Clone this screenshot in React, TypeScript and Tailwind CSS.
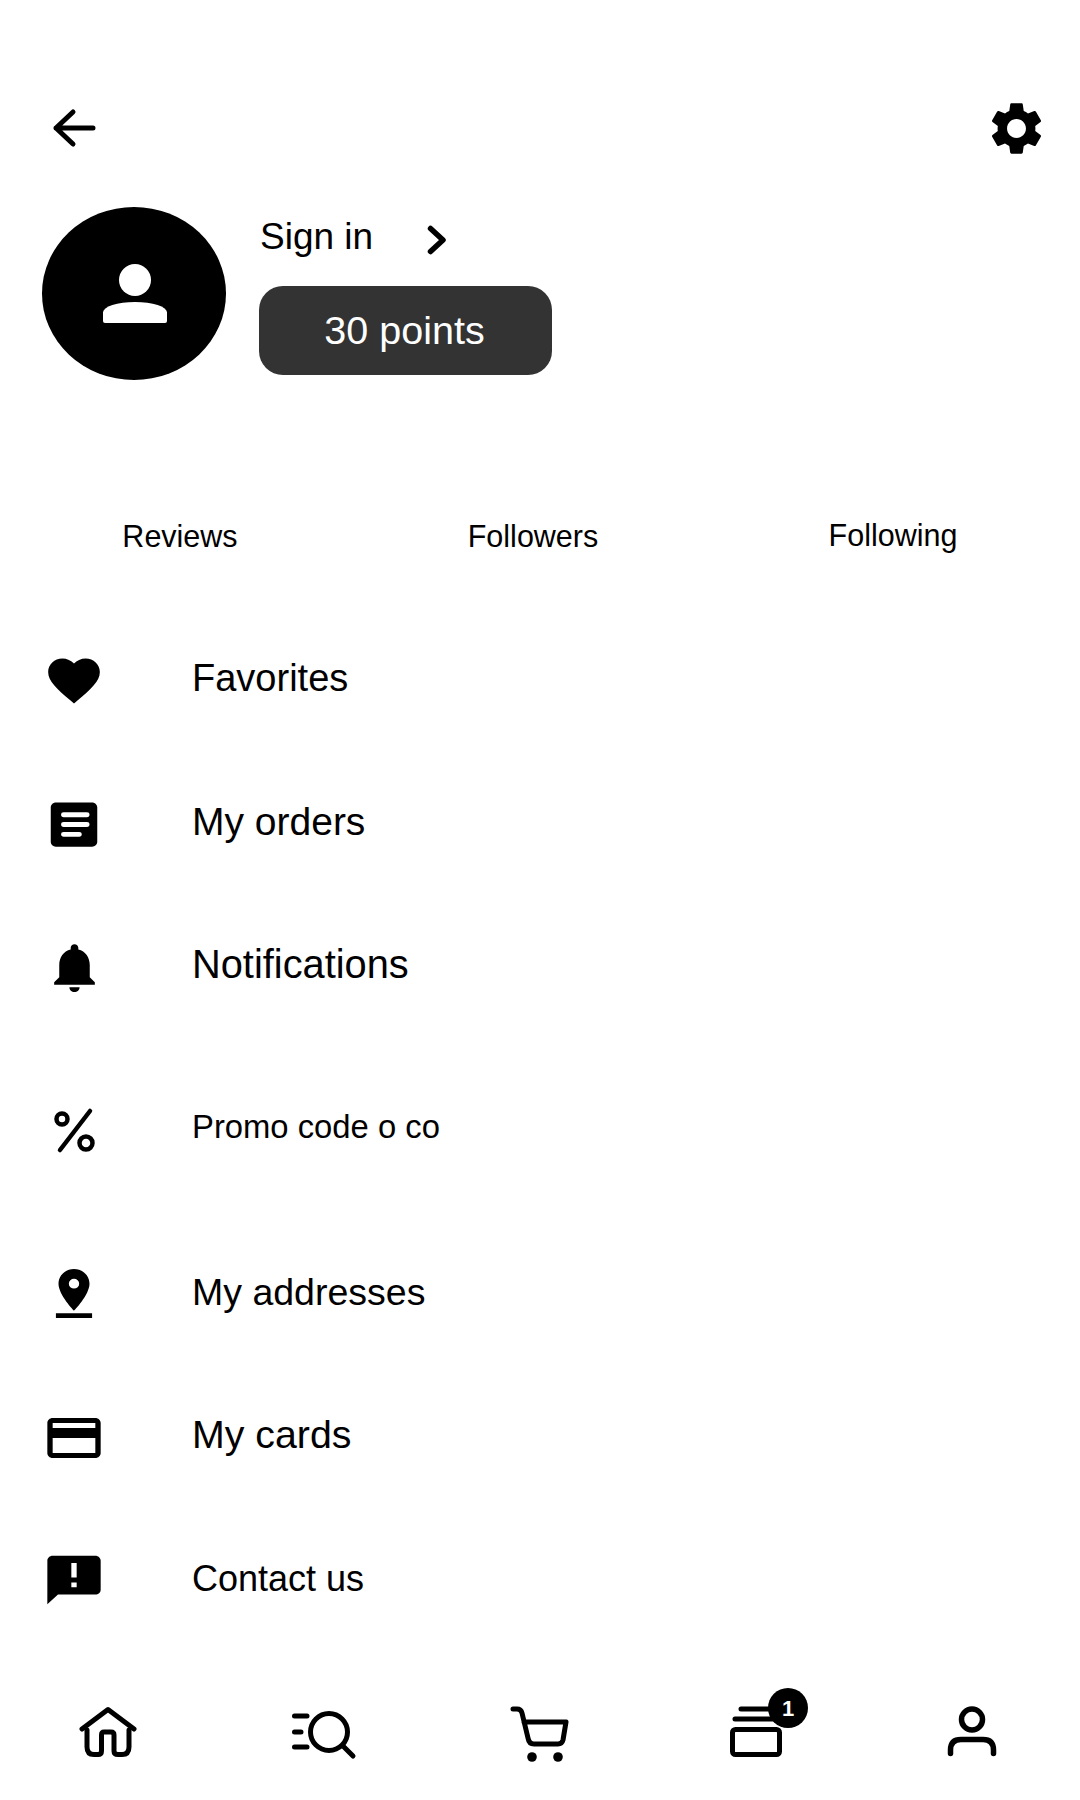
import React from "react";

const font = { fontFamily: '"Liberation Sans", Arial, sans-serif' };

function Mi({ d, cls }: { d: string; cls: string }) {
  return (
    <svg viewBox="0 0 24 24" className={cls} fill="#000" fillRule="evenodd" preserveAspectRatio="none">
      <path d={d} />
    </svg>
  );
}

const P = {
  heart: "M12 21.35l-1.45-1.32C5.4 15.36 2 12.28 2 8.5 2 5.42 4.42 3 7.5 3c1.74 0 3.41.81 4.5 2.09C13.09 3.81 14.76 3 16.5 3 19.58 3 22 5.42 22 8.5c0 3.78-3.4 6.86-8.55 11.54L12 21.35z",
  article: "M19 3H5c-1.1 0-2 .9-2 2v14c0 1.1.9 2 2 2h14c1.1 0 2-.9 2-2V5c0-1.1-.9-2-2-2zm-5 14H8a1 1 0 0 1 0-2h6a1 1 0 0 1 0 2zm3-4H8a1 1 0 0 1 0-2h9a1 1 0 0 1 0 2zm0-4H8a1 1 0 0 1 0-2h9a1 1 0 0 1 0 2z",
  bell: "M12 22c1.1 0 2-.9 2-2h-4c0 1.1.89 2 2 2zm6-6v-5c0-3.07-1.64-5.64-4.5-6.32V4c0-.83-.67-1.5-1.5-1.5s-1.5.67-1.5 1.5v.68C7.63 5.36 6 7.92 6 11v5l-2 2v1h16v-1l-2-2z",
  pin: "M12 2C8.69 2 6 4.69 6 8c0 4.5 6 11 6 11s6-6.5 6-11c0-3.31-2.69-6-6-6zm0 8a2 2 0 1 1 0-4 2 2 0 0 1 0 4zM5 20h14v2H5z",
  card: "M20 4H4c-1.11 0-1.99.89-1.99 2L2 18c0 1.11.89 2 2 2h16c1.11 0 2-.89 2-2V6c0-1.11-.89-2-2-2zm0 14H4v-6h16v6zm0-10H4V6h16v2z",
  alert: "M20 2H4c-1.1 0-1.99.9-1.99 2L2 22l4-4h14c1.1 0 2-.9 2-2V4c0-1.1-.9-2-2-2zm-7 9h-2V5h2v6zm0 4h-2v-2h2v2z",
  gear: "M19.14 12.94c.04-.3.06-.61.06-.94 0-.32-.02-.64-.07-.94l2.03-1.58c.18-.14.23-.41.12-.61l-1.92-3.32c-.12-.22-.37-.29-.59-.22l-2.39.96c-.5-.38-1.03-.7-1.62-.94l-.36-2.54c-.04-.24-.24-.41-.48-.41h-3.84c-.24 0-.43.17-.47.41l-.36 2.54c-.59.24-1.13.57-1.62.94l-2.39-.96c-.22-.08-.47 0-.59.22L2.74 8.87c-.12.21-.08.47.12.61l2.03 1.58c-.05.3-.09.63-.09.94s.02.64.07.94l-2.03 1.58c-.18.14-.23.41-.12.61l1.92 3.32c.12.22.37.29.59.22l2.39-.96c.5.38 1.03.7 1.62.94l.36 2.54c.05.24.24.41.48.41h3.84c.24 0 .44-.17.47-.41l.36-2.54c.59-.24 1.13-.56 1.62-.94l2.39.96c.22.08.47 0 .59-.22l1.92-3.32c.12-.22.07-.47-.12-.61l-2.01-1.58zM12 15.6c-1.98 0-3.6-1.62-3.6-3.6s1.62-3.6 3.6-3.6 3.6 1.62 3.6 3.6-1.62 3.6-3.6 3.6z",
};

function Percent() {
  return (
    <svg viewBox="0 0 56 56" className="w-[56px] h-[56px] shrink-0 -ml-[2px] -mt-[2px]" fill="none" stroke="#000" strokeWidth="4.5" strokeLinecap="round">
      <path d="M45 13 L15 52" />
      <circle cx="17" cy="21" r="5.5" />
      <circle cx="41" cy="45" r="6.5" />
    </svg>
  );
}

function Row({ icon, label, cls, textCls }: { icon: React.ReactNode; label: string; cls: string; textCls: string }) {
  return (
    <div className={"flex items-center h-[60px] " + cls}>
      <div className="w-[60px] h-[60px] ml-[44px] flex items-center justify-center shrink-0">{icon}</div>
      <span className={"ml-[88px] text-black leading-none " + textCls}>{label}</span>
    </div>
  );
}

function Home() {
  return (
    <svg viewBox="0 0 64 64" className="w-[64px] h-[64px]" fill="none" stroke="#000" strokeWidth="5" strokeLinejoin="round" strokeLinecap="round">
      <path d="M6 27 L32 7.5 L58 27" />
      <path d="M11 28 V45 Q11 52.5 18 52.5 H22 Q25.5 52.5 25.5 49 V33 Q25.5 30 28 30 H35 Q38 30 38 33 V49 Q38 52.5 42 52.5 H46 Q53 52.5 53 45 V28" />
    </svg>
  );
}

function SearchNav() {
  return (
    <svg viewBox="0 0 72 56" className="w-[72px] h-[56px]" fill="none" stroke="#000" strokeWidth="5" strokeLinecap="round">
      <path d="M6.5 10 H19 M6.5 26 H13 M6.5 41 H19" />
      <circle cx="41" cy="26" r="18.5" />
      <path d="M55 40 L65 50" />
    </svg>
  );
}

function Cart() {
  return (
    <svg viewBox="0 0 64 64" className="w-[64px] h-[64px]" fill="none" stroke="#000" strokeWidth="5" strokeLinecap="round" strokeLinejoin="round">
      <path d="M5 7 H9 Q13 7 14 11 L20 36 Q21 42 26 42 H50 Q54 42 55 38 L58 20 H16" />
      <circle cx="24" cy="55" r="4.8" fill="#000" stroke="none" />
      <circle cx="50" cy="55" r="4.8" fill="#000" stroke="none" />
    </svg>
  );
}

function CardsNav() {
  return (
    <svg viewBox="0 0 64 64" className="w-[64px] h-[64px]" fill="none" stroke="#000" strokeWidth="5" strokeLinecap="round" strokeLinejoin="round">
      <path d="M17 7 H50 M11 17 H50" />
      <rect x="8.5" y="27.5" width="47" height="25" rx="3" />
    </svg>
  );
}

function Person() {
  return (
    <svg viewBox="0 0 64 64" className="w-[64px] h-[64px]" fill="none" stroke="#000" strokeWidth="5.5" strokeLinecap="round">
      <circle cx="32" cy="17.5" r="10.5" />
      <path d="M10.5 51.5 V48 Q10.5 37.5 21 37.5 H43 Q53.5 37.5 53.5 48 V51.5" />
    </svg>
  );
}

export default function App() {
  return (
    <div className="w-[1080px] h-[1800px] bg-white flex flex-col overflow-hidden text-black" style={font}>
      <header className="flex items-center justify-between pt-[95px] pl-[50px] pr-[32px]">
        <svg viewBox="0 0 48 48" className="w-[48px] h-[66px]" fill="none" stroke="#000" strokeWidth="5" strokeLinecap="round" strokeLinejoin="round">
          <path d="M43 24 H6 M23 8 L6 24 L23 40" />
        </svg>
        <div className="w-[63px] h-[66px] flex items-center justify-center">
          <Mi d={P.gear} cls="w-[63px] h-[63px]" />
        </div>
      </header>

      <section className="flex items-center mt-[46px] pl-[42px]">
        <div className="w-[184px] h-[173px] rounded-[50%] bg-black flex flex-col items-center justify-center shrink-0">
          <div className="w-[32px] h-[32px] rounded-[50%] bg-white ml-[1px] -mt-[1px]" />
          <div className="w-[64px] h-[21px] bg-white rounded-t-[50%] rounded-b-[2px] mt-[6px] ml-[1px]" />
        </div>
        <div className="ml-[33px] flex flex-col">
          <div className="flex items-center h-[50px]">
            <span className="text-[37px] leading-none ml-[1px] -mt-[2px]">Sign in</span>
            <svg viewBox="0 0 20 30" className="w-[20px] h-[30px] ml-[54px] mt-[5px]" fill="none" stroke="#000" strokeWidth="5.5" strokeLinecap="round" strokeLinejoin="round">
              <path d="M3.5 3.5 L16 15 L3.5 26.5" />
            </svg>
          </div>
          <div className="mt-[24px] w-[293px] h-[89px] rounded-[24px] bg-[#333333] text-white text-[39.5px] leading-none flex items-center justify-center pr-[2px]">
            30 points
          </div>
        </div>
      </section>

      <section className="grid grid-cols-[360px_346px_374px] mt-[136px] h-[40px] text-[30.5px] leading-none">
        <div className="flex items-center justify-center">Reviews</div>
        <div className="flex items-center justify-center">Followers</div>
        <div className="flex items-center justify-center -mt-[2px]">Following</div>
      </section>

      <section className="flex flex-col mt-[92px]">
        <Row cls="" textCls="text-[38px]" label="Favorites" icon={<Mi d={P.heart} cls="w-[62px] h-[59px] mt-[5px] shrink-0" />} />
        <Row cls="mt-[83px]" textCls="text-[39px]" label="My orders" icon={<Mi d={P.article} cls="w-[62px] h-[59px] mt-[6px] shrink-0" />} />
        <Row cls="mt-[84px]" textCls="text-[39.8px]" label="Notifications" icon={<Mi d={P.bell} cls="w-[61px] h-[59px] mt-[4px] shrink-0" />} />
        <Row cls="mt-[102px]" textCls="text-[32.8px]" label="Promo code o co" icon={<Percent />} />
        <Row cls="mt-[106px]" textCls="text-[37.5px]" label="My addresses" icon={<Mi d={P.pin} cls="w-[62px] h-[59px] mt-[1px] shrink-0" />} />
        <Row cls="mt-[82px]" textCls="text-[39.3px]" label="My cards" icon={<Mi d={P.card} cls="w-[64px] h-[60px] mt-[6px] shrink-0" />} />
        <Row cls="mt-[84px]" textCls="text-[36px]" label="Contact us" icon={<Mi d={P.alert} cls="w-[64px] h-[58px] mt-[2px] shrink-0" />} />
      </section>

      <nav className="grid grid-cols-5 mt-[89px] h-[72px] items-center justify-items-center">
        <Home />
        <SearchNav />
        <Cart />
        <div className="relative">
          <CardsNav />
          <div className="absolute -top-[14px] left-[44px] w-[40px] h-[40px] rounded-full bg-black text-white text-[22px] font-bold flex items-center justify-center">1</div>
        </div>
        <Person />
      </nav>
    </div>
  );
}
